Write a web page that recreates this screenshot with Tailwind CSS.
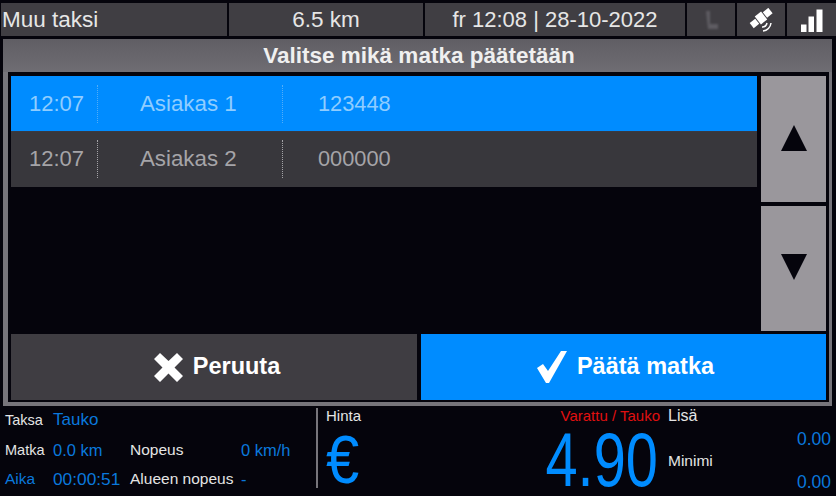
<!DOCTYPE html>
<html lang="en">
<head>
  <meta charset="UTF-8" />
  <title>Taksi</title>
  <script src="https://cdn.jsdelivr.net/npm/@tailwindcss/browser@4"></script>
</head>
<body class="bg-[#05040c]">
<div class="w-[836px] h-[496px] overflow-hidden flex flex-col bg-[#05040c] font-['Liberation_Sans',Arial,sans-serif]">

  <!-- Top bar -->
  <div class="flex h-[33px] mt-[3px] shrink-0 gap-[2px] pl-[1px] text-[22px] leading-[33px] text-[#e6e6e6]">
    <div class="w-[226px] bg-[#403e43] pl-[1px] text-[22.500px]">Muu taksi</div>
    <div class="w-[194px] bg-[#403e43] text-center text-[22.500px]">6.5 km</div>
    <div class="w-[260px] bg-[#403e43] text-center">fr 12:08 | 28-10-2022</div>
    <div class="w-[48px] bg-[#403e43] flex items-center justify-center">
      <svg width="16" height="24" viewBox="0 0 16 24" class="blur-[1px]"><path d="M3 3h4v13h8v5H5z" fill="#5e5c62"/></svg>
    </div>
    <div class="w-[48px] bg-[#403e43] flex items-center justify-center">
      <svg width="24" height="24" viewBox="0 0 24 24" fill="#fff">
        <g transform="rotate(-38 12 10)">
          <rect x="0" y="7" width="7" height="6.500"/>
          <rect x="8" y="5" width="8" height="10"/>
          <rect x="17" y="6.500" width="7" height="7"/>
        </g>
        <path d="M13 19a5 5 0 0 0 5-4M14 23a9 9 0 0 0 8-8" fill="none" stroke="#fff" stroke-width="1.500"/>
      </svg>
    </div>
    <div class="flex-1 bg-[#403e43] flex items-center justify-center">
      <svg width="24" height="24" viewBox="0 0 24 24" fill="#fff">
        <rect x="1" y="16.500" width="5.500" height="8"/><rect x="8.500" y="8.500" width="5.500" height="16"/><rect x="16.500" y="1.500" width="6" height="23"/>
      </svg>
    </div>
  </div>

  <!-- Panel -->
  <div class="mt-[3px] ml-[3px] mr-[4px] h-[367px] shrink-0 flex flex-col bg-[#77757b] pl-[5px] pr-[3px] pb-[4px]">
    <div class="h-[33px] shrink-0 bg-gradient-to-b from-[#605e64] to-[#6f6d73] -ml-[5px] -mr-[3px] pl-[3px] text-center text-[22.500px] font-bold leading-[33px] text-[#f0f0f0]">Valitse mikä matka päätetään</div>
    <div class="flex-1 flex flex-col bg-[#05040c] pl-[3px] pr-[3px] pt-[4px] pb-[2px] gap-[3px]">
      <div class="flex-1 flex gap-[4px]">
        <div class="flex-1 flex flex-col text-[22.300px]">
          <div class="h-[56px] bg-[#008cff] text-[#8fcdff] flex items-center border-b border-[#3a3a42] pt-[1px]">
            <div class="w-[87px] pl-[18px] border-r border-dotted border-[#52adf8] h-[38px] leading-[38px] text-[22px]">12:07</div>
            <div class="w-[185px] pl-[42px] border-r border-dotted border-[#52adf8] h-[38px] leading-[38px]">Asiakas 1</div>
            <div class="pl-[35px] text-[21.800px]">123448</div>
          </div>
          <div class="h-[55px] bg-[#38373c] text-[#a5a4a8] flex items-center pb-[1px]">
            <div class="w-[87px] pl-[18px] border-r border-dotted border-[#a5a4a8] h-[38px] leading-[38px] text-[22px]">12:07</div>
            <div class="w-[185px] pl-[42px] border-r border-dotted border-[#a5a4a8] h-[38px] leading-[38px]">Asiakas 2</div>
            <div class="pl-[35px] text-[21.800px]">000000</div>
          </div>
        </div>
        <div class="w-[65px] flex flex-col gap-[4px]">
          <div class="flex-1 bg-[#9a979c] flex items-center justify-center">
            <svg width="28" height="28" viewBox="0 0 28 28" fill="#05040c" class="-mt-[2px]"><path d="M14 1L27 27H1z"/></svg>
          </div>
          <div class="flex-1 bg-[#9a979c] flex items-center justify-center">
            <svg width="28" height="28" viewBox="0 0 28 28" fill="#05040c" class="-mt-[3px]"><path d="M1 1h26L14 27z"/></svg>
          </div>
        </div>
      </div>
      <div class="h-[66px] shrink-0 flex gap-[4px] text-[23.500px] font-bold text-white">
        <div class="w-[406px] bg-[#3f3d42] flex items-center justify-center gap-[9px] pl-[5px]">
          <svg width="31" height="31" viewBox="0 0 31 31" fill="#fff"><path d="M7 1l8.500 8L24 1l6 6-8.500 8.500L30 24l-6 6-8.500-8.500L7 30l-6-6 8.500-8.500L1 7z"/></svg>
          <span>Peruuta</span>
        </div>
        <div class="flex-1 bg-[#008cff] flex items-center justify-center gap-[9px] pl-[3px]">
          <svg width="32" height="34" viewBox="0 0 32 34" fill="#fff"><path d="M1 18l6-4 5 7L25 1h6L13 33h-3z"/></svg>
          <span>Päätä matka</span>
        </div>
      </div>
    </div>
  </div>

  <!-- Status area -->
  <div class="flex-1 flex text-[14.500px] text-[#e4e4e4]">
    <div class="w-[316px] shrink-0 flex flex-col pl-[5px] pt-[4px] gap-[9.500px] leading-[20px]">
      <div class="flex"><span class="w-[48px]">Taksa</span><span class="text-[#0a78dc] text-[17px]">Tauko</span></div>
      <div class="flex"><span class="w-[48px]">Matka</span><span class="w-[77px] text-[#0a78dc] text-[16.500px]">0.0 km</span><span class="w-[111px] text-[15.500px]">Nopeus</span><span class="text-[#0a78dc] text-[16.500px]">0 km/h</span></div>
      <div class="flex"><span class="w-[48px] text-[#0a78dc] text-[15.500px]">Aika</span><span class="w-[77px] text-[#0a78dc] text-[17.300px]">00:00:51</span><span class="w-[111px] text-[15.500px]">Alueen nopeus</span><span class="text-[#0a78dc] text-[16.500px]">-</span></div>
    </div>
    <div class="w-[2px] h-[80px] mt-[2px] bg-[#77757b] shrink-0"></div>
    <div class="w-[342px] shrink-0 flex flex-col pl-[8px]">
      <div class="flex justify-between leading-[20px] text-[15px]">
        <span>Hinta</span>
        <span class="text-[#e01010]">Varattu / Tauko</span>
      </div>
      <div class="flex justify-between items-center h-[66px] mt-[1px] text-[#008cff]">
        <span class="text-[68px] leading-[60px] origin-left scale-x-[0.88] -mt-[2px]">€</span>
        <span class="text-[76px] leading-[60px] origin-right scale-x-[0.76] mr-[2px]">4.90</span>
      </div>
    </div>
    <div class="flex-1 pl-[8px] pr-[5px] flex flex-col">
      <div class="leading-[20px] text-[16px]">Lisä</div>
      <div class="text-right text-[#0a78dc] text-[17.500px] leading-[20px] mt-[3px]">0.00</div>
      <div class="leading-[20px] text-[15.500px] mt-[2px]">Minimi</div>
      <div class="text-right text-[#0a78dc] text-[17.500px] leading-[20px] mt-[1px]">0.00</div>
    </div>
  </div>
</div>
</body>
</html>
